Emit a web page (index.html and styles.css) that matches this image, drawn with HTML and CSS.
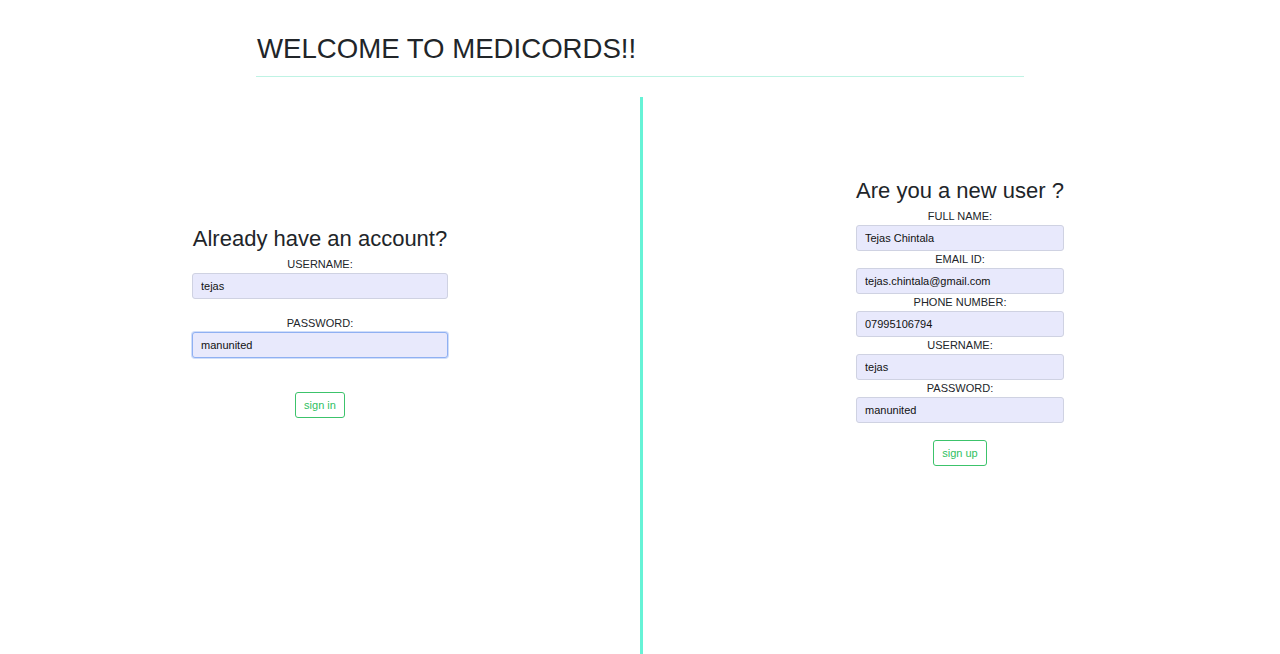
FILE: index.html
```html
<!DOCTYPE html>
<html lang="en">
<head>
<meta charset="utf-8">
<title>Medicords</title>
<link rel="stylesheet" href="styles.css">
</head>
<body>
<header class="header">
  <h1 class="title">WELCOME TO MEDICORDS!!</h1>
  <hr class="rule">
</header>
<main class="main">
  <section class="col col-left">
    <form class="form form-login">
      <h2 class="form-title">Already have an account?</h2>
      <label class="label">USERNAME:</label>
      <input class="field" type="text" value="tejas">
      <label class="label label-gap">PASSWORD:</label>
      <input class="field field-focus" type="text" value="manunited">
      <div class="actions actions-login"><button class="btn" type="button">sign in</button></div>
    </form>
  </section>
  <div class="divider"></div>
  <section class="col col-right">
    <form class="form form-signup">
      <h2 class="form-title">Are you a new user ?</h2>
      <label class="label">FULL NAME:</label>
      <input class="field" type="text" value="Tejas Chintala">
      <label class="label">EMAIL ID:</label>
      <input class="field" type="text" value="tejas.chintala@gmail.com">
      <label class="label">PHONE NUMBER:</label>
      <input class="field" type="text" value="07995106794">
      <label class="label">USERNAME:</label>
      <input class="field" type="text" value="tejas">
      <label class="label">PASSWORD:</label>
      <input class="field" type="text" value="manunited">
      <div class="actions actions-signup"><button class="btn" type="button">sign up</button></div>
    </form>
  </section>
</main>
</body>
</html>
```

FILE: styles.css
```css
* { box-sizing: border-box; }
html, body { margin: 0; padding: 0; }
body {
  font-family: "Liberation Sans", Arial, sans-serif;
  color: #212529;
  background: #fff;
  overflow: hidden;
}
.header {
  width: 768px;
  margin: 0 auto;
}
.title {
  margin: 32px 0 10px 1px;
  font-size: 27.6px;
  line-height: 34px;
  font-weight: normal;
}
.rule {
  margin: 0;
  border: 0;
  border-top: 1px solid #bff3e4;
  height: 0;
}
.main {
  display: flex;
  align-items: flex-start;
  margin-top: 20px;
}
.col {
  height: 450px;
  display: flex;
  align-items: center;
  justify-content: center;
}
.col-left { width: 640px; }
.col-right { flex: 1; margin-right: 3px; }
.divider {
  width: 3px;
  height: 557px;
  background: #66f3d6;
}
.form {
  display: flex;
  flex-direction: column;
  text-align: center;
}
.form-login { width: 256px; }
.form-signup { width: 208px; }
.form-title {
  margin: 0 0 4px;
  font-size: 22px;
  line-height: 26.4px;
  font-weight: normal;
  white-space: nowrap;
}
.label {
  display: block;
  font-size: 11px;
  line-height: 17px;
  color: #212529;
}
.label-gap { margin-top: 16px; }
.field {
  display: block;
  width: 100%;
  height: 26px;
  margin: 0;
  padding: 0 8px;
  font-family: "Liberation Sans", Arial, sans-serif;
  font-size: 11px;
  color: #111;
  background: #e8e9fc;
  border: 1px solid #cfd2e2;
  border-radius: 3px;
  outline: none;
}
.field-focus {
  border-color: #8fb0f2;
  box-shadow: 0 0 0 1px rgba(120, 160, 240, 0.35);
}
.actions { display: flex; justify-content: center; }
.actions-login { margin-top: 34px; }
.actions-signup { margin-top: 17px; }
.btn {
  font-family: "Liberation Sans", Arial, sans-serif;
  font-size: 11px;
  line-height: 14px;
  padding: 5px 8px;
  color: #2fbf5f;
  background: #fff;
  border: 1px solid #3cc36b;
  border-radius: 3px;
  cursor: pointer;
}
```
